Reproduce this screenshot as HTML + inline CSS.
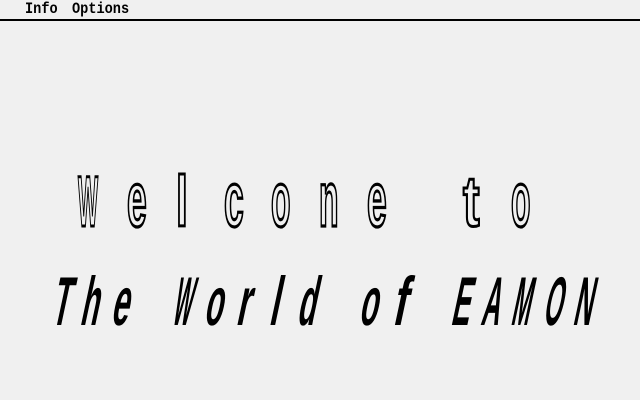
<!DOCTYPE html>
<html><head><meta charset="utf-8"><style>
html,body{margin:0;padding:0}
body{width:640px;height:400px;background:#f0f0f0;position:relative;overflow:hidden;font-family:"Liberation Sans",sans-serif}
.bar{position:absolute;left:0;top:0;width:640px;height:19px;background:#f0f0f0;border-bottom:2px solid #000}
.m{position:absolute;top:0;font-family:"Liberation Mono",monospace;font-weight:bold;font-size:16px;line-height:19px;transform:scaleX(0.85);transform-origin:left}
.c{position:absolute;font-weight:bold;line-height:1;}
.o{font-size:71px;top:167px;color:transparent;-webkit-text-stroke:3px #000;transform-origin:0 60px}
.f{font-size:69px;top:267px;color:#000;transform-origin:0 58px}
</style></head><body>
<div class="bar"></div>
<div class="m" style="left:25px">Info</div>
<div class="m" style="left:72px">Options</div>

<span class="c o" style="left:78px;transform:scaleX(0.3)">W</span>
<span class="c o" style="left:127px;transform:scale(0.5,1.1)">e</span>
<span class="c o" style="left:176px;transform:scaleX(0.6)">l</span>
<span class="c o" style="left:224px;transform:scale(0.5,1.1)">c</span>
<span class="c o" style="left:271px;transform:scale(0.45,1.1)">o</span>
<span class="c o" style="left:319px;transform:scale(0.45,1.1)">n</span>
<span class="c o" style="left:367px;transform:scale(0.5,1.1)">e</span>
<span class="c o" style="left:463px;transform:scale(0.7,1)">t</span>
<span class="c o" style="left:511px;transform:scale(0.45,1.1)">o</span>

<span class="c f" style="left:50px;transform:skewX(-12deg) scaleX(0.43)">T</span>
<span class="c f" style="left:79px;transform:skewX(-12deg) scaleX(0.43)">h</span>
<span class="c f" style="left:110px;transform:skewX(-12deg) scaleX(0.45)">e</span>
<span class="c f" style="left:171px;transform:skewX(-12deg) scaleX(0.28)">W</span>
<span class="c f" style="left:203px;transform:skewX(-12deg) scaleX(0.43)">o</span>
<span class="c f" style="left:235px;transform:skewX(-12deg) scaleX(0.5)">r</span>
<span class="c f" style="left:268px;transform:skewX(-12deg) scaleX(0.5)">l</span>
<span class="c f" style="left:296px;transform:skewX(-12deg) scaleX(0.43)">d</span>
<span class="c f" style="left:358px;transform:skewX(-12deg) scaleX(0.43)">o</span>
<span class="c f" style="left:391px;transform:skewX(-12deg) scaleX(0.6)">f</span>
<span class="c f" style="left:450px;transform:skewX(-12deg) scaleX(0.4)">E</span>
<span class="c f" style="left:480px;transform:skewX(-12deg) scaleX(0.37)">A</span>
<span class="c f" style="left:510px;transform:skewX(-12deg) scaleX(0.32)">M</span>
<span class="c f" style="left:542px;transform:skewX(-12deg) scaleX(0.34)">O</span>
<span class="c f" style="left:572px;transform:skewX(-12deg) scaleX(0.37)">N</span>
</body></html>
